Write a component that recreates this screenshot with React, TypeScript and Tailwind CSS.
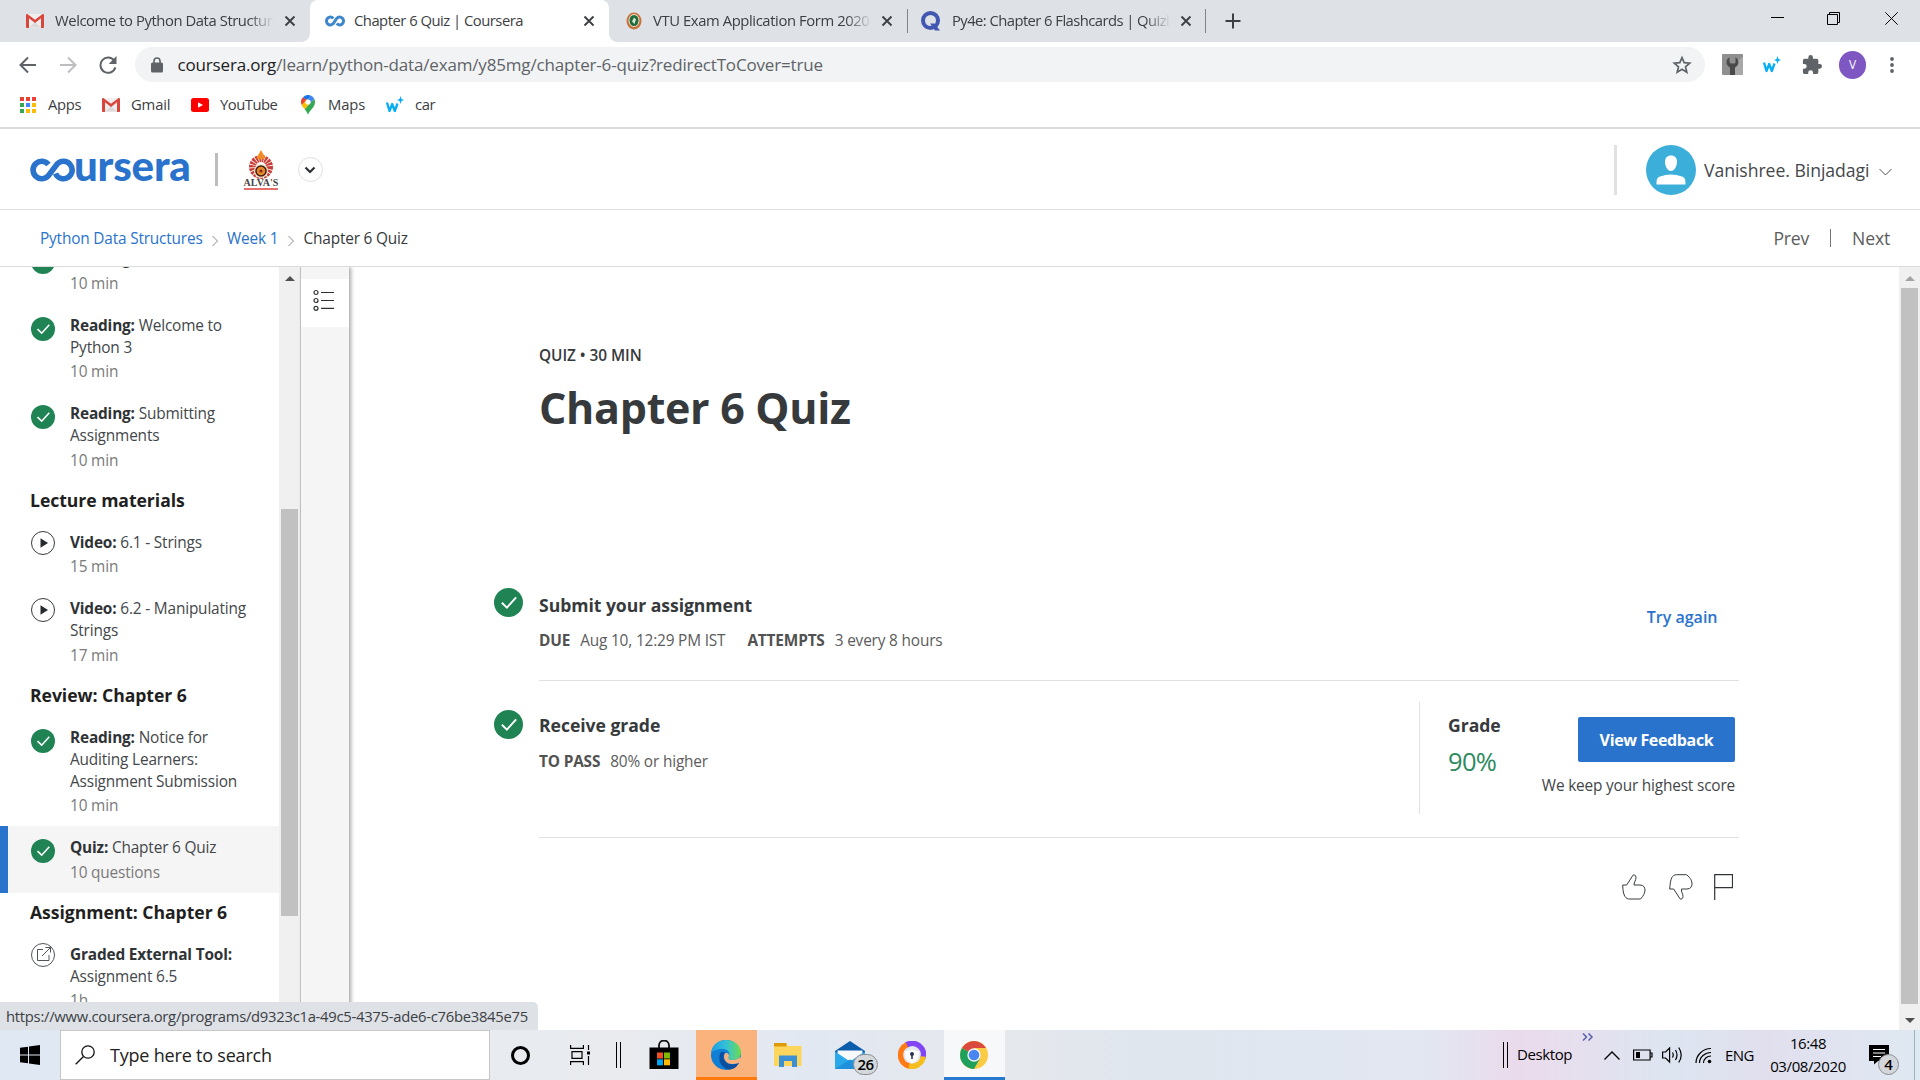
import React from 'react';

const GmailIcon = ({ className = '' }: { className?: string }) => (
  <svg viewBox="0 0 18 14" className={'h-[14px] w-[18px] shrink-0 ' + className}>
    <rect width="18" height="14" rx="1" fill="#f1eeee" />
    <path d="M3 13.5 9 8l6 5.500z" fill="#dcdada" />
    <path d="M0 1.200v12a.8.8 0 0 0 .8.8H3V4.300l6 4.600 6-4.600V14h2.200a.8.8 0 0 0 .8-.8v-12C18 .2 16.800-.3 16 .4L9 5.700 2 .4C1.200-.3 0 .2 0 1.200z" fill="#d9463b" />
  </svg>
);

const InfinityIcon = () => (
  <svg viewBox="0 0 20 12" className="h-3 w-5 shrink-0">
    <path d="M8.300 3.400A3.900 3.900 0 1 0 8.300 8.600L11.700 3.400A3.900 3.900 0 1 1 11.700 8.600" fill="none" stroke="#3f87cd" strokeWidth="3" />
  </svg>
);

const WPlus = () => (
  <svg viewBox="0 0 18 18" className="h-[18px] w-[18px] shrink-0" fill="none" stroke="#08aef2">
    <path d="M1 6.500 3.500 15 6.200 8 8.800 15 11.500 7.500" strokeWidth="2.300" strokeLinejoin="round" />
    <path d="M14.500 0l1 3 2.500 1-2.500 1-1 3-1-3-2.500-1 2.500-1z" fill="#08aef2" stroke="none" />
  </svg>
);

const TabX = ({ className = '' }: { className?: string }) => (
  <svg viewBox="0 0 12 12" className={'h-3 w-3 shrink-0 ' + className}>
    <path d="M1.500 1.500l9 9M10.500 1.500l-9 9" stroke="#3c4043" strokeWidth="1.900" />
  </svg>
);

const Check = ({ className }: { className: string }) => (
  <svg viewBox="0 0 24 24" className={'shrink-0 ' + className}>
    <circle cx="12" cy="12" r="12" fill="#1f8354" />
    <path d="M6.500 12.200l4.200 4 7.600-8.400" fill="none" stroke="#fff" strokeWidth="1.600" />
  </svg>
);

const Play = () => (
  <svg viewBox="0 0 24 24" className="h-6 w-6 shrink-0">
    <circle cx="12" cy="12" r="11.500" fill="none" stroke="#373a3c" />
    <path d="M9.500 7.300v9.400l7.500-4.700z" fill="#262a2d" />
  </svg>
);

const External = () => (
  <svg viewBox="0 0 24 24" className="h-6 w-6 shrink-0" fill="none" stroke="#50545a">
    <circle cx="12" cy="12" r="11.500" />
    <path d="M12 6.500H6.500v11h11.500V12M11 13l8.500-8.500M14.500 4.500h5v5" />
  </svg>
);

type ItemProps = { kind: string; lines: string[]; sub: string; icon: 'check' | 'play' | 'ext'; active?: boolean };
const Item = ({ kind, lines, sub, icon, active }: ItemProps) => (
  <div className={active ? 'flex border-l-8 border-[#2a73cc] bg-[#f5f5f5] pl-[22.500px]' : 'flex pl-[30.500px]'}>
    <div className={icon === 'check' ? 'mr-[15.500px] pt-[13px]' : 'mr-[15.500px] pt-[10.500px]'}>
      {icon === 'check' ? <Check className="h-6 w-6" /> : icon === 'play' ? <Play /> : <External />}
    </div>
    <div className="pb-[9px] pt-[11px] text-[15.400px] leading-[22px] tracking-[-0.170px] text-[#43474a]">
      <div className="whitespace-nowrap">
        <b className="font-bold text-[#2f3335]">{kind}</b> {lines[0]}
      </div>
      {lines.slice(1).map((l) => (
        <div key={l} className="whitespace-nowrap">{l}</div>
      ))}
      <div className="mt-[2.500px] whitespace-nowrap text-[#7a7a7a]">{sub}</div>
    </div>
  </div>
);

const Heading = ({ children }: { children: React.ReactNode }) => (
  <div className="flex h-10 items-center whitespace-nowrap pl-[30px] text-[17.600px] font-bold tracking-[-0.050px] text-[#1f1f1f]">{children}</div>
);

const TabStrip = () => (
  <div className="flex h-[42px] items-center bg-[#dee1e6] text-[14.800px] tracking-[-0.450px] text-[#3c4043]">
    <div className="flex h-full w-[310px] shrink-0 items-center rounded-br-lg pl-[26px]">
      <GmailIcon />
      <span className="ml-[11px] w-[219px] overflow-hidden whitespace-nowrap pb-px tracking-[-0.420px] [mask-image:linear-gradient(90deg,#000_88%,transparent)]">Welcome to Python Data Structures</span>
      <TabX className="ml-[10px]" />
    </div>
    <div className="relative flex h-full w-[299px] shrink-0 items-center rounded-t-lg bg-white pl-[15px]">
      <div className="absolute -left-2 bottom-0 h-2 w-2 bg-[radial-gradient(circle_at_0_0,#dee1e6_7.500px,#fff_8px)]" />
      <div className="absolute -right-2 bottom-0 h-2 w-2 bg-[radial-gradient(circle_at_100%_0,#dee1e6_7.500px,#fff_8px)]" />
      <InfinityIcon />
      <span className="ml-[9px] w-[219px] whitespace-nowrap pb-px tracking-[-0.500px]">Chapter 6 Quiz | Coursera</span>
      <TabX className="ml-[10px]" />
    </div>
    <div className="flex h-6 w-[299px] shrink-0 items-center border-r border-[#808388] pl-[17px]">
      <svg viewBox="0 0 16 18" className="h-[18px] w-4 shrink-0">
        <ellipse cx="8" cy="9" rx="7.500" ry="8.500" fill="#c9713a" />
        <ellipse cx="8" cy="8.500" rx="5.500" ry="6.500" fill="#eadfcf" />
        <ellipse cx="8" cy="8.500" rx="4.500" ry="5.500" fill="#1f6b3a" />
        <path d="M6 9.500l2-4 2 2-1.500 4.500z" fill="#d9e8d8" />
      </svg>
      <span className="ml-[11px] w-[219px] overflow-hidden whitespace-nowrap pb-px tracking-[-0.400px] [mask-image:linear-gradient(90deg,#000_88%,transparent)]">VTU Exam Application Form 2020</span>
      <TabX className="ml-[9px]" />
    </div>
    <div className="flex h-6 w-[298px] shrink-0 items-center border-r border-[#808388] pl-3">
      <svg viewBox="0 0 21 20" className="h-5 w-[21px] shrink-0">
        <circle cx="10.500" cy="9.500" r="7.500" fill="none" stroke="#4257b2" strokeWidth="4" />
        <path d="M10 12.500h4.500l5.500 7h-5z" fill="#4257b2" />
      </svg>
      <span className="ml-[11px] w-[219px] overflow-hidden whitespace-nowrap pb-px tracking-[-0.560px] [mask-image:linear-gradient(90deg,#000_88%,transparent)]">Py4e: Chapter 6 Flashcards | Quizlet</span>
      <TabX className="ml-[9px]" />
    </div>
    <svg viewBox="0 0 16 16" className="ml-[19px] h-4 w-4 shrink-0">
      <path d="M8 .5v15M.5 8h15" stroke="#3c4043" strokeWidth="2" />
    </svg>
    <div className="mb-[5px] ml-auto mr-[22px] flex items-center">
      <div className="mb-[3px] h-px w-[13px] bg-black" />
      <svg viewBox="0 0 13 13" className="ml-[43px] h-[13px] w-[13px]" fill="none" stroke="#000">
        <path d="M.5 2.500h10v10h-10zM2.500 2.500v-2h10v10h-2" />
      </svg>
      <svg viewBox="0 0 13 13" className="ml-[45px] h-[13px] w-[13px]" stroke="#000">
        <path d="M.3.3l12.400 12.400M12.700.3.3 12.700" />
      </svg>
    </div>
  </div>
);

const Toolbar = () => (
  <div className="flex h-[45px] items-center bg-white">
    <svg viewBox="0 0 18 18" className="ml-[19px] h-[18px] w-[18px] shrink-0" fill="none" stroke="#5f6368" strokeWidth="2">
      <path d="M17 9H2M9 1.500 1.500 9 9 16.500" />
    </svg>
    <svg viewBox="0 0 18 18" className="ml-[22px] h-[18px] w-[18px] shrink-0" fill="none" stroke="#bcbec1" strokeWidth="2">
      <path d="M1 9h15M9 1.500 16.500 9 9 16.500" />
    </svg>
    <svg viewBox="0 0 18 18" className="ml-[22px] h-[18px] w-[18px] shrink-0" fill="none" stroke="#5f6368" strokeWidth="2">
      <path d="M15.200 4.600A7.600 7.600 0 1 0 16.400 11.400" />
      <path d="M17.500 0v8H9.700z" fill="#5f6368" stroke="none" />
    </svg>
    <div className="ml-[18px] flex h-[35px] w-[1570px] shrink-0 items-center rounded-full bg-[#f1f3f4] pl-4">
      <svg viewBox="0 0 12 16" className="h-4 w-3 shrink-0">
        <rect y="5.500" width="12" height="10" rx="1.500" fill="#5f6368" />
        <path d="M3 6V4a3 3 0 0 1 6 0v2" fill="none" stroke="#5f6368" strokeWidth="1.600" />
      </svg>
      <span className="ml-[14.500px] whitespace-nowrap text-[17px] tracking-[-0.165px] text-[#5f6368]">
        <span className="text-[#202124]">coursera.org</span>/learn/python-data/exam/y85mg/chapter-6-quiz?redirectToCover=true
      </span>
      <svg viewBox="0 0 20 20" className="ml-auto mr-[13px] h-5 w-5" fill="none" stroke="#5f6368" strokeWidth="1.700">
        <path d="M10 2.700l2.200 5 5.500.5-4.200 3.600 1.300 5.400L10 14.300l-4.800 2.900 1.300-5.400L2.300 8.200l5.500-.5z" />
      </svg>
    </div>
    <svg viewBox="0 0 21 21" className="ml-[17px] h-[21px] w-[21px] shrink-0">
      <rect width="21" height="21" rx="1" fill="#8f8f8f" />
      <path d="M12 9l9-6v18h-9z" fill="#a8a8a8" />
      <path d="M7.500 3.200C3.500 5 3.500 11.500 8 13.500V21h5v-7.500c4.500-2 4.500-8.500.5-10.300v5L12.300 9.500H8.700L7.500 8.200z" fill="#4a4a4a" />
    </svg>
    <div className="ml-5"><WPlus /></div>
    <svg viewBox="1 1 22 22" className="ml-[21px] h-5 w-5 shrink-0" fill="#5f6368">
      <path d="M20.500 11H19V7a2 2 0 0 0-2-2h-4V3.500a2.500 2.500 0 0 0-5 0V5H4a2 2 0 0 0-2 2v3.800h1.500a2.700 2.700 0 0 1 0 5.400H2V20c0 1.100.9 2 2 2h3.800v-1.500a2.700 2.700 0 0 1 5.400 0V22H17a2 2 0 0 0 2-2v-4h1.500a2.500 2.500 0 0 0 0-5z" />
    </svg>
    <div className="ml-[17px] flex h-7 w-[27px] shrink-0 items-center justify-center rounded-full bg-[#7e57c2] text-[12px] font-medium text-white">V</div>
    <svg viewBox="0 0 4 16" className="ml-6 h-4 w-1 shrink-0" fill="#5f6368">
      <circle cx="2" cy="2" r="1.900" /><circle cx="2" cy="8" r="1.900" /><circle cx="2" cy="14" r="1.900" />
    </svg>
  </div>
);

const appColors = ['#ea4335', '#ea4335', '#ea4335', '#34a853', '#4285f4', '#fbbc04', '#34a853', '#fbbc04', '#fbbc04'];
const Bookmarks = () => (
  <div className="flex h-[42px] items-center border-b-2 border-[#dadce0] bg-white pb-[5px] text-[14.800px] tracking-[-0.350px] text-[#3c4043]">
    <svg viewBox="0 0 16 16" className="ml-5 h-4 w-4 shrink-0">
      {appColors.map((c, i) => (
        <rect key={i} x={(i % 3) * 6} y={Math.floor(i / 3) * 6} width="4" height="4" fill={c} />
      ))}
    </svg>
    <span className="ml-3 w-[54px]">Apps</span>
    <GmailIcon />
    <span className="ml-[11px] w-[60px] tracking-[-0.150px]">Gmail</span>
    <svg viewBox="0 0 18 14" className="h-[14px] w-[18px] shrink-0">
      <rect width="18" height="14" rx="2.500" fill="#f00" />
      <path d="M7 4.200v5.600L12 7z" fill="#fff" />
    </svg>
    <span className="ml-[11px] w-[81px] tracking-[-0.500px]">YouTube</span>
    <svg viewBox="0 0 14 20" className="h-5 w-[14px] shrink-0">
      <path d="M3.700 14.300C5.500 16.500 6.500 18 7 20c.8-4.500 7-7 7-13a7 7 0 0 0-.9-3.400z" fill="#34a853" />
      <path d="M9.700.6A7 7 0 0 1 13.100 3.600L8.300 9.300 5 6z" fill="#4285f4" />
      <path d="M2 2.200A7 7 0 0 1 9.700.6L5.500 6z" fill="#1a73e8" />
      <path d="M2 2.200A7 7 0 0 0 .7 10L6 5.500z" fill="#ea4335" />
      <path d="M.7 10c.6 1.600 2 3 3 4.300L9.500 7.400 6 4z" fill="#fbbc04" />
      <circle cx="7" cy="7" r="2.600" fill="#fff" />
    </svg>
    <span className="ml-[13px] w-[58px] tracking-[-0.150px]">Maps</span>
    <WPlus />
    <span className="ml-[11px]">car</span>
  </div>
);

const AlvasLogo = () => (
  <div className="flex w-[36px] flex-col items-center">
    <svg viewBox="0 0 26 29" className="h-[29px] w-[26px]">
      <circle cx="13" cy="17" r="8.500" fill="none" stroke="#c9403a" strokeWidth="7" strokeDasharray="2.200 .7" />
      <path d="M13 0l4.500 8q-4.500 3-9 0z" fill="#f08a24" />
      <circle cx="13" cy="21" r="7" fill="#f6e3c8" />
      <circle cx="13" cy="21" r="5.800" fill="#3d1c14" />
      <circle cx="13" cy="21" r="4.300" fill="#e8882a" />
      <circle cx="13" cy="21" r="1.600" fill="#7c2e14" />
    </svg>
    <span className="whitespace-nowrap font-['Liberation_Serif',serif] text-[10px] font-bold leading-[8px] tracking-[0.100px] text-[#444]">ALVA'S</span>
    <div className="mt-px h-[2px] w-[34px] bg-[#e4716d]" />
  </div>
);

const Header = () => (
  <div className="flex h-[81px] items-center border-b border-[#e1e1e1] bg-white pt-px">
    <div className="ml-[30px] flex h-10 w-[160px] items-center">
      <svg viewBox="0 0 46 24" className="h-6 w-[46px] shrink-0">
        <path d="M18.500 6.500A8.700 8.700 0 1 0 18.500 17.500L27 6.200A8.700 8.700 0 1 1 25.500 15.500" fill="none" stroke="#2a73cc" strokeWidth="5.600" />
      </svg>
      <span className="-ml-[2px] -mt-[9px] font-['Lato',sans-serif] text-[42px] font-black leading-10 tracking-[-0.200px] text-[#2a73cc]">ursera</span>
    </div>
    <div className="ml-[25px] h-[33px] w-[3px] bg-[#bdbdbd]" />
    <div className="ml-[25px]"><AlvasLogo /></div>
    <div className="ml-[18.500px] flex h-[25px] w-[25px] items-center justify-center rounded-full border border-[#e1e1e1]">
      <svg viewBox="0 0 12 8" className="h-2 w-3" fill="none" stroke="#2d3135" strokeWidth="2.200"><path d="M1.500 1.500 6 6l4.500-4.500" /></svg>
    </div>
    <div className="ml-auto h-[50px] w-[3px] bg-[#e1e1e1]" />
    <svg viewBox="0 0 50 50" className="ml-[29px] h-[50px] w-[50px]">
      <circle cx="25" cy="25" r="25" fill="#3bafda" />
      <path d="M25 10.500c4 0 6 2.500 6 6.500s-2.500 9-6 9-6-5-6-9 2-6.500 6-6.500zM10.500 39.500c0-5 .5-7 3.500-8 4-1.300 7-2 11-2s7 .7 11 2c3 1 3.500 3 3.500 8z" fill="#fff" />
    </svg>
    <span className="ml-2 mt-px whitespace-nowrap text-[17.600px] tracking-[-0.030px] text-[#43474a]">Vanishree. Binjadagi</span>
    <svg viewBox="0 0 13 8" className="ml-[9px] mr-[28.500px] mt-1 h-2 w-[13px]" fill="none" stroke="#525252"><path d="M.5 1l6 6 6-6" /></svg>
  </div>
);

const Crumb = () => (
  <svg viewBox="0 0 6 12" className="mt-1 h-3 w-[6px] shrink-0" fill="none" stroke="#8a8a8a"><path d="M.5 1l5 5-5 5" /></svg>
);

const Breadcrumbs = () => (
  <div className="flex h-[57px] items-center border-b border-[#dcdcdc] bg-white pt-px text-[15.400px] tracking-[-0.180px] text-[#2a73cc]">
    <span className="ml-10 w-[172px] whitespace-nowrap">Python Data Structures</span>
    <Crumb />
    <span className="ml-[9px] w-[61px] whitespace-nowrap">Week 1</span>
    <Crumb />
    <span className="ml-[9.500px] whitespace-nowrap text-[#373a3c]">Chapter 6 Quiz</span>
    <div className="ml-auto mr-[30px] flex items-center text-[17.600px] text-[#5c5c5c]">
      <span>Prev</span>
      <div className="mx-[21px] h-[18px] w-px bg-[#757575]" />
      <span>Next</span>
    </div>
  </div>
);

const Sidebar = () => (
  <div className="relative z-10 flex w-[349px] shrink-0">
    <div className="w-[279px] overflow-hidden bg-white">
      <div className="-mt-[30px]">
        <Item kind="Reading:" lines={['Course Intro']} sub="10 min" icon="check" />
        <Item kind="Reading:" lines={['Welcome to', 'Python 3']} sub="10 min" icon="check" />
        <Item kind="Reading:" lines={['Submitting', 'Assignments']} sub="10 min" icon="check" />
        <Heading>Lecture materials</Heading>
        <Item kind="Video:" lines={['6.1 - Strings']} sub="15 min" icon="play" />
        <Item kind="Video:" lines={['6.2 - Manipulating', 'Strings']} sub="17 min" icon="play" />
        <Heading>Review: Chapter 6</Heading>
        <Item kind="Reading:" lines={['Notice for', 'Auditing Learners:', 'Assignment Submission']} sub="10 min" icon="check" />
        <Item kind="Quiz:" lines={['Chapter 6 Quiz']} sub="10 questions" icon="check" active />
        <Heading>Assignment: Chapter 6</Heading>
        <Item kind="Graded External Tool:" lines={['', 'Assignment 6.5']} sub="1h" icon="ext" />
      </div>
    </div>
    <div className="flex w-[22px] flex-col items-center border-r border-[#c8c8c8] bg-[#f0f0f0]">
      <div className="mt-[9px] h-0 w-0 border-x-[5px] border-b-[5px] border-x-transparent border-b-[#505050]" />
      <div className="mt-[228px] h-[407px] w-[17px] bg-[#c1c1c1]" />
    </div>
    <div className="w-12 bg-[#f5f5f5] pt-3 shadow-[2px_0_4px_rgba(0,0,0,0.35)]">
      <div className="flex h-12 items-center bg-white pb-[6px] pl-3">
        <svg viewBox="0 0 22 22" className="h-[22px] w-[22px]" fill="none" stroke="#2d3135" strokeWidth="1.200">
          <circle cx="3" cy="3.500" r="2" /><circle cx="3" cy="11.500" r="2" /><circle cx="3" cy="19.300" r="2" />
          <path d="M8 3.500h13M8 11.500h13M8 19.300h13" />
        </svg>
      </div>
    </div>
  </div>
);

const Main = () => (
  <div className="flex-1 overflow-hidden bg-white">
    <div className="ml-[190px] w-[1200px] text-[#373a3c]">
      <div className="pt-[78px] text-[15.400px] font-semibold leading-[22px] tracking-[-0.060px]">QUIZ • 30 MIN</div>
      <h1 className="mt-[11px] text-[43px] font-bold leading-[60px] tracking-[-0.300px]">Chapter 6 Quiz</h1>
      <div className="-ml-[45px] mt-[149px] flex h-[93px]">
        <Check className="mr-[16px] mt-[1px] h-[29px] w-[29px]" />
        <div className="flex-1 pt-[6px]">
          <div className="text-[17.600px] font-bold leading-[24px] tracking-[-0.050px]">Submit your assignment</div>
          <div className="mt-[13px] flex whitespace-nowrap text-[15.400px] leading-[22px] tracking-[-0.170px] text-[#5c5c5c]">
            <b className="font-bold text-[#525252]">DUE</b><span className="ml-[10px]">Aug 10, 12:29 PM IST</span>
            <b className="ml-[22px] font-bold text-[#525252]">ATTEMPTS</b><span className="ml-[10px]">3 every 8 hours</span>
          </div>
        </div>
        <div className="mr-[21.500px] pt-[18px] text-[16px] font-semibold leading-6 text-[#2a73cc]">Try again</div>
      </div>
      <div className="flex h-[158px] border-y border-[#e1e1e1]">
        <Check className="-ml-[45px] mr-[16px] mt-[29px] h-[29px] w-[29px]" />
        <div className="flex-1 pt-[32px]">
          <div className="text-[17.600px] font-bold leading-[24px] tracking-[-0.050px]">Receive grade</div>
          <div className="mt-[14px] flex text-[15.400px] leading-[22px] tracking-[-0.170px] text-[#5c5c5c]">
            <b className="font-bold text-[#525252]">TO PASS</b><span className="ml-[10px]">80% or higher</span>
          </div>
        </div>
        <div className="mt-[21px] flex h-28 w-[320px] border-l border-[#e1e1e1]">
          <div className="ml-7 mt-[11px]">
            <div className="text-[17.600px] font-bold leading-[24px] tracking-[-0.050px]">Grade</div>
            <div className="mt-[6px] text-[25.500px] font-normal leading-[36px] tracking-[-0.700px] text-[#2c8a5e]">90%</div>
          </div>
          <div className="ml-auto mr-1 mt-[15px] flex flex-col items-end">
            <button className="h-[45px] w-[157px] rounded-[2px] bg-[#2a73cc] text-[16px] font-bold tracking-[-0.350px] text-white">View Feedback</button>
            <span className="mt-[13px] whitespace-nowrap text-[15.400px] leading-[22px] tracking-[-0.180px] text-[#43474a]">We keep your highest score</span>
          </div>
        </div>
      </div>
      <div className="mr-[6px] mt-[36px] flex justify-end">
        <svg viewBox="0 0 24 26" className="h-[26px] w-6" fill="none" stroke="#373a3c">
          <path d="M.7 11h4L11 1.200c.6-.9 3-.2 3 2.300 0 3-2 4.500-2 7.500h6c3.500 0 5 2.500 5 5s-1.500 6-4.500 9H6.500C2.500 24 1 20 .7 11z" />
        </svg>
        <svg viewBox="0 0 24 26" className="ml-[23px] h-[26px] w-6" fill="none" stroke="#373a3c">
          <path d="M.7 15h4L11 24.800c.6.9 3 .2 3-2.300 0-3-2-4.500-1.500-7.500H18c3.500 0 5-2.500 5-5S22 4 17.500.700H7.500C3 1 1.500 4 .7 15z" />
        </svg>
        <svg viewBox="0 0 19 26" className="ml-[21px] h-[26px] w-[19px]" fill="none" stroke="#30343a">
          <path d="M.7 26V.7h17.800v13H.7" strokeWidth="1.200" />
        </svg>
      </div>
    </div>
  </div>
);

const Taskbar = () => (
  <div className="flex h-[50px] bg-[linear-gradient(90deg,#dfe8f3_0%,#e6ebf1_20%,#e9ebee_32%,#e2e8f2_42%,#e6e8ec_52%,#dfe6ee_60%,#e2e7f1_74%,#eadbec_79%,#e6dfee_82%,#dde5f1_87%,#e1dfee_92%,#dfe9f2_100%)] text-black">
    <div className="flex w-[60px] shrink-0 items-center justify-center">
      <svg viewBox="0 0 20 20" className="h-5 w-5"><path d="M0 2.800 8 1.700V9.500H0zM9 1.500 20 0v9.500H9zM0 10.500h8v7.800L0 17.200zM9 10.500h11V20L9 18.500z" /></svg>
    </div>
    <div className="flex w-[430px] shrink-0 items-center border border-[#c6c6c6] bg-white pl-[14px]">
      <svg viewBox="0 0 20 20" className="h-5 w-5" fill="none" stroke="#111" strokeWidth="1.300"><circle cx="13" cy="7" r="6.200" /><path d="M8.500 11.500.7 19.300" /></svg>
      <span className="ml-[15px] text-[18px] tracking-[-0.200px] text-[#222]">Type here to search</span>
    </div>
    <div className="flex w-[60px] shrink-0 items-center justify-center">
      <div className="h-[19px] w-[19px] rounded-full border-[3px] border-black" />
    </div>
    <div className="flex w-[60px] shrink-0 items-center justify-center">
      <svg viewBox="0 0 20 20" className="h-5 w-5" fill="none" stroke="#000" strokeWidth="1.200"><path d="M.6 0v3.400h12.800V0M.6 20v-3.400h12.800V20M2 6.600h10v6.800H2zM18.500 0v5M18.500 11v9" /><path d="M17 6.500h3v3h-3z" fill="#000" stroke="none" /></svg>
    </div>
    <div className="ml-[6px] mt-3 h-[26px] w-[5px] shrink-0 border-x border-black" />
    <div className="ml-[28px] flex w-[30px] shrink-0 items-center">
      <svg viewBox="0 0 30 30" className="h-[30px] w-[30px]">
        <path d="M10 8V5.500a5 5 0 0 1 10 0V8" fill="none" stroke="#111" strokeWidth="1.800" />
        <path d="M.5 7.500h29V29h-29z" fill="#000" />
        <path d="M8 12.500h6v6H8z" fill="#f25022" /><path d="M15 12.500h6v6h-6z" fill="#7fba00" /><path d="M8 19.300h6v6H8z" fill="#00a4ef" /><path d="M15 19.300h6v6h-6z" fill="#ffb900" />
      </svg>
    </div>
    <div className="ml-[17px] flex w-[61px] shrink-0 items-center justify-center border-b-[3px] border-[#ff7a0a] bg-[#fbb37e] pr-px pt-[3px]">
      <svg viewBox="0 0 30 30" className="h-[30px] w-[30px]">
        <defs>
          <linearGradient id="edgeTop" x1="0" y1="0.500" x2="1" y2="0.500"><stop offset="0" stopColor="#1b9de2" /><stop offset=".5" stopColor="#35c1d8" /><stop offset="1" stopColor="#6bdc4f" /></linearGradient>
        </defs>
        <circle cx="15" cy="15" r="15" fill="#0f7fd6" />
        <path d="M0 13C1 5 7 0 15 0c9 0 15 6 15 12.500 0 4.500-3.500 7.500-8 7.500-4 0-5.500-1.500-4-4 1.500-3-1-7-6-7C6 9 1.500 11 0 13z" fill="url(#edgeTop)" />
        <path d="M10 12c-4 6-1 15 7 17.500 5 .5 9-2.500 11-6.500-7 3-14 1-15.500-5-.5-2.500.5-4.500 1.500-6z" fill="#0b4f9e" />
        <path d="M14.500 13c2-.5 4 1 3.500 3-1.500 2.500 0 4 4 4 3 0 6-1.500 7.500-3.500L30 20l-2.500 3c-5 2-12 1.500-14-4-.8-2.500-.3-5 1-6z" fill="#fbb37e" />
      </svg>
    </div>
    <div className="flex w-[61px] shrink-0 items-center justify-center">
      <svg viewBox="0 0 28 24" className="h-6 w-7"><path d="M0 0h12l2 3h13.500v20H0z" fill="#ffd65c" /><path d="M0 0h12.500v3.500H0z" fill="#dd9b0a" /><path d="M5 24V12.500h18V24h-5v-6h-8v6z" fill="#3c90d4" /></svg>
    </div>
    <div className="relative ml-[17px] flex w-[48px] shrink-0 items-center">
      <svg viewBox="0 0 30 28" className="h-7 w-[30px]"><path d="M0 10 15 0l15 10v18H0z" fill="#0b5cab" /><path d="M2.500 9.500h25v10h-25z" fill="#f7f9fb" /><path d="M0 10.500 15 20.500 30 10.500V28H0z" fill="#2aa9ea" /><path d="M0 28 15 18.500 30 28z" fill="#1e90dc" /></svg>
      <div className="absolute left-[18px] top-[24px] flex h-[21px] w-[25px] items-center justify-center rounded-full border border-[#8a8d90] bg-[#d5d8da] text-[15px] font-semibold leading-none tracking-[-0.500px]">26</div>
    </div>
    <div className="flex w-[58px] shrink-0 items-center justify-center">
      <svg viewBox="0 0 28 28" className="h-7 w-7" fill="none" strokeWidth="5.500"><path d="M8 4.200A11.300 11.300 0 0 1 25 17" stroke="#8145f5" /><path d="M25.200 15.500A11.300 11.300 0 0 1 9 24.200" stroke="#f5bd1e" /><path d="M11 25A11.300 11.300 0 0 1 9 3.800" stroke="#ff7a14" /><path d="M7 10c3 0 5-.5 7-2 2 1.500 4 2 7 2 .500 6-2 10-7 12-5-2-7.500-6-7-12z" fill="#fff" stroke="none" /><circle cx="14" cy="13" r="2" fill="#2a3350" stroke="none" /><path d="M14 13v5" stroke="#2a3350" strokeWidth="1.600" /></svg>
    </div>
    <div className="ml-[3px] flex w-[61px] shrink-0 items-center justify-center border-b-[3px] border-[#2579cf] bg-[#f6f8fa] pr-[2px] pt-[3px]">
      <svg viewBox="0 0 28 28" className="h-7 w-7"><circle cx="14" cy="14" r="14" fill="#fccb44" /><path d="M14 14 1.900 7A14 14 0 0 1 26.100 7H14z" fill="#da4a3e" /><path d="M1.900 7A14 14 0 0 0 14 28l6-10.500-6-3.500z" fill="#1fa05c" /><circle cx="14" cy="14" r="6.700" fill="#f4f4f4" /><circle cx="14" cy="14" r="5.300" fill="#4a86f0" /></svg>
    </div>
    <div className="ml-auto flex shrink-0 text-[15px]">
      <div className="mt-3 h-[26px] w-[5px] border-x border-black" />
      <span className="ml-[9px] w-[65px] self-center pb-px tracking-[-0.400px]">Desktop</span>
      <svg viewBox="0 0 12 8" className="mt-[3px] h-2 w-3" fill="none" stroke="#5b60a8" strokeWidth="1.500"><path d="M1 .5 4.500 4 1 7.500M6.500.5 10 4 6.500 7.500" /></svg>
      <svg viewBox="0 0 16 9" className="ml-[10px] h-[9px] w-4 self-center" fill="none" stroke="#000" strokeWidth="1.300"><path d="M.5 8.500l7.500-7.500 7.500 7.500" /></svg>
      <svg viewBox="0 0 20 12" className="ml-[13px] h-3 w-5 self-center" fill="none" stroke="#000" strokeWidth="1.200"><path d="M.6 1h16.500v10H.6zM17.500 4h1.500v4h-1.500" /><path d="M3 3h4v6H3z" fill="#000" stroke="none" /></svg>
      <svg viewBox="0 0 21 18" className="ml-[9px] h-[18px] w-[21px] self-center" fill="none" stroke="#000" strokeWidth="1.200"><path d="M.6 6h3l4-4v14l-4-4h-3zM10.500 6.500q1.500 2.500 0 5M13.500 4q3 5 0 10M16.700 1.500q5 7.500 0 15" /></svg>
      <svg viewBox="0 0 17 17" className="ml-[12px] h-[17px] w-[17px] self-center" fill="none" stroke="#000" strokeWidth="1.200"><path d="M1 16C1 8 8 1.500 16 1.500M4.500 16C4.500 10 10 5.500 16 5.500M8.500 16c0-4 3.500-7 7.500-7" /><circle cx="14.500" cy="14.500" r="1.800" fill="#000" stroke="none" /></svg>
      <span className="ml-[13px] w-[29px] self-center tracking-[-0.600px]">ENG</span>
      <div className="ml-[15px] flex w-[78px] flex-col items-center whitespace-nowrap leading-[23px] tracking-[-0.400px]">
        <span className="mt-[2px]">16:48</span>
        <span>03/08/2020</span>
      </div>
      <div className="relative ml-[22px] mr-[5px] w-[46px] border-r border-[#9fb0bf]">
        <svg viewBox="0 0 20 20" className="mt-[15px] h-5 w-5"><path d="M0 0h20v16H9l-4 3.500V16H0z" /><path d="M4 4.500h12M4 8h12M4 11.500h8" stroke="#fff" /></svg>
        <div className="absolute left-[9px] top-[24px] flex h-[21px] w-[21px] items-center justify-center rounded-full border border-[#8a8d90] bg-[#d3d6da] text-[15px] font-semibold leading-none">4</div>
      </div>
    </div>
  </div>
);

export default function App() {
  return (
    <div className="relative flex h-[1080px] w-[1920px] flex-col overflow-hidden bg-white font-['Open_Sans',sans-serif]">
      <TabStrip />
      <Toolbar />
      <Bookmarks />
      <Header />
      <Breadcrumbs />
      <div className="flex h-[763px] overflow-hidden">
        <Sidebar />
        <Main />
        <div className="flex w-[21px] shrink-0 flex-col items-center bg-[#f0f0f0]">
          <div className="mt-[9px] h-0 w-0 border-x-[5px] border-b-[5px] border-x-transparent border-b-[#a3a3a3]" />
          <div className="mt-[7px] h-[716px] w-[17px] bg-[#c1c1c1]" />
          <div className="mt-[14px] h-0 w-0 border-x-[5px] border-t-[5px] border-x-transparent border-t-[#505050]" />
        </div>
      </div>
      <Taskbar />
      <div className="absolute bottom-[50px] left-0 z-20 flex h-7 w-[538px] items-center rounded-tr-[5px] bg-[#dee1e6] pl-[6px] text-[14.800px] text-[#3c4043]">
        <span className="whitespace-nowrap tracking-[-0.270px]">https://www.coursera.org/programs/d9323c1a-49c5-4375-ade6-c76be3845e75</span>
      </div>
    </div>
  );
}
